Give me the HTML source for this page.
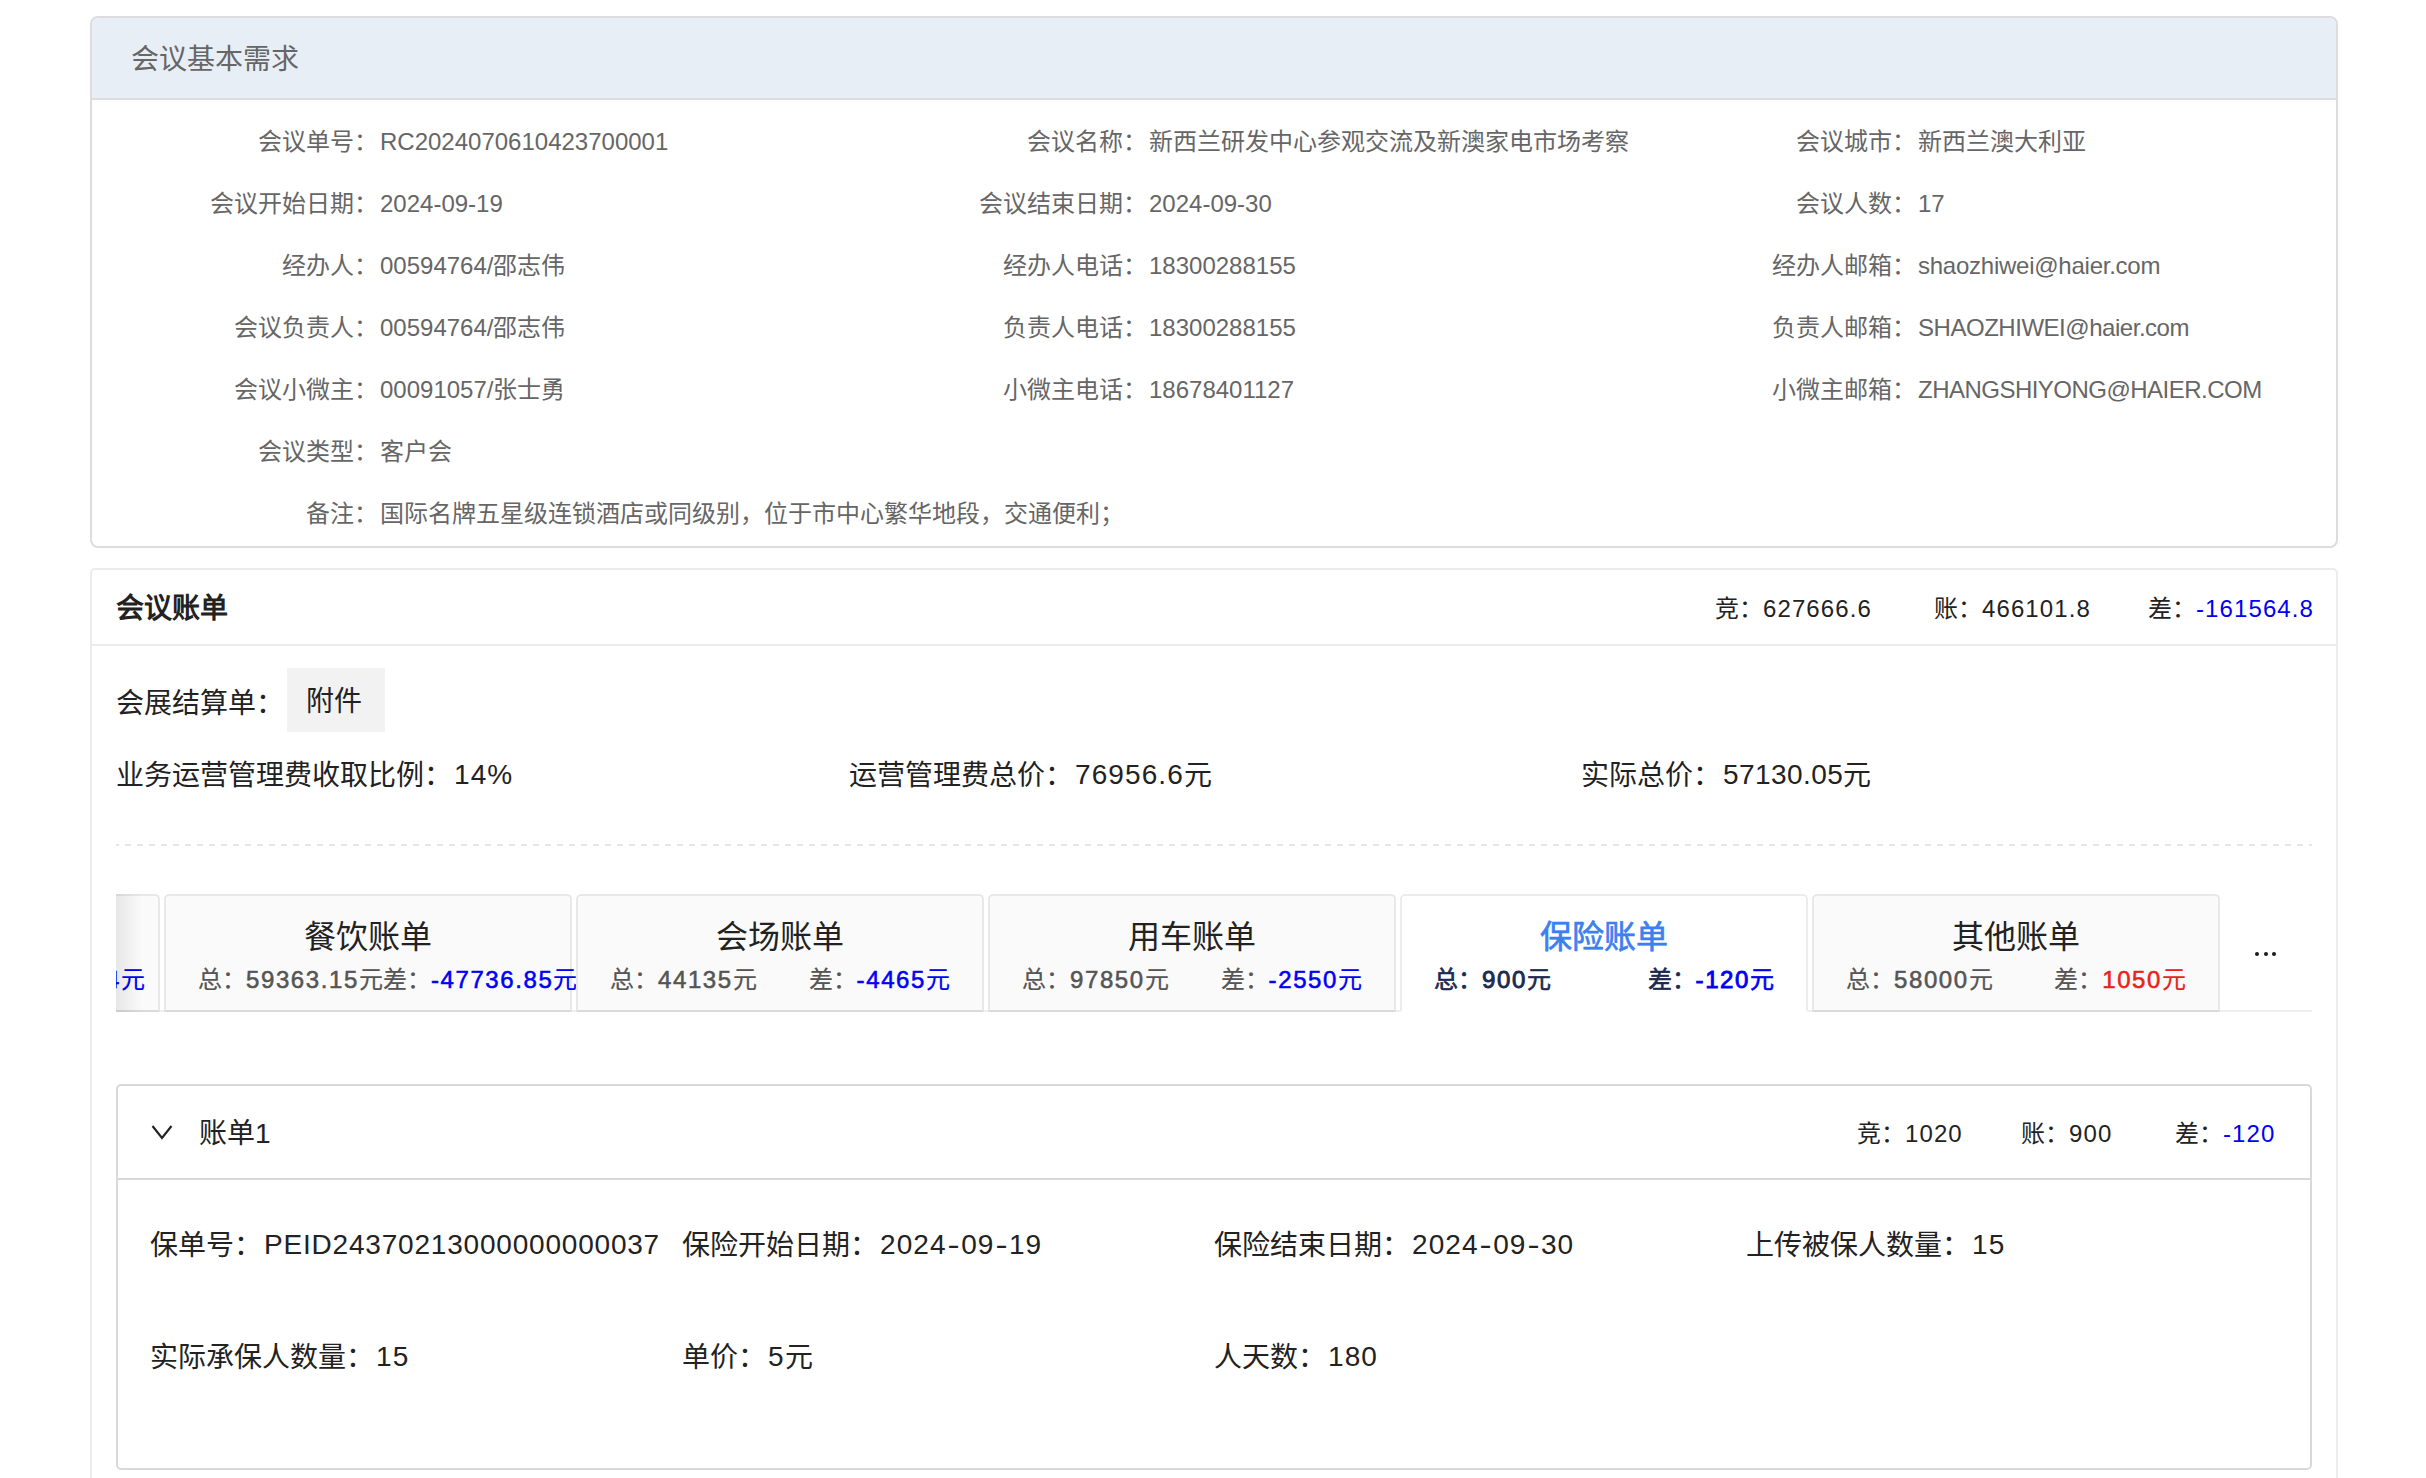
<!DOCTYPE html>
<html lang="zh-CN">
<head>
<meta charset="utf-8">
<style>
html,body{margin:0;padding:0;background:#fff;}
body{width:2426px;height:1478px;overflow:hidden;position:relative;font-family:"Liberation Sans",sans-serif;}
.a{position:absolute;white-space:nowrap;line-height:40px;}
.f24{font-size:24px;}
.f28{font-size:28px;}
.f32{font-size:32px;}
.g{color:#666;}
.k{color:#222;}
.lab{width:400px;text-align:right;}
.blue{color:#0000f5;}
.d{letter-spacing:1.1px;}
.h{display:inline-block;transform:scaleX(1.3);padding:0 2px 0 2px;}
.f28 .d{position:relative;top:-1px;margin-left:2px;}
.ts .d{font-weight:normal;letter-spacing:1.6px;-webkit-text-stroke:0.55px currentColor;}
#p1{position:absolute;left:90px;top:16px;width:2244px;height:528px;border:2px solid #dddddd;border-radius:8px;overflow:hidden;}
#p1h{position:absolute;left:0;top:0;width:2244px;height:80px;background:#e8eef5;border-bottom:2px solid #dddddd;}
#p2{position:absolute;left:90px;top:568px;width:2244px;height:1000px;border:2px solid #ececec;border-radius:5px;}
#p2h{position:absolute;left:0;top:0;width:2244px;height:74px;border-bottom:2px solid #ececec;}
#dash{position:absolute;left:116px;top:844px;width:2196px;height:2px;background:repeating-linear-gradient(90deg,#e6e6e6 0,#e6e6e6 6px,transparent 6px,transparent 12px);background-position:-3px 0;}
#navline{position:absolute;left:116px;top:1010px;width:2196px;height:2px;background:#efefef;}
#nav{position:absolute;left:116px;top:894px;width:2120px;height:118px;overflow:hidden;}
.tab{position:absolute;top:0;width:404px;height:114px;background:#fafafa;border:2px solid #e8e8e8;border-bottom-color:#dadada;border-radius:5px 5px 0 0;}
.tab.act{background:#fff;border-color:#ececec;border-bottom-color:#fff;}
.tt{position:absolute;left:0;width:404px;top:21px;text-align:center;font-size:32px;line-height:40px;color:#222;white-space:nowrap;}
.act .tt{color:#3c80f0;-webkit-text-stroke:0.7px currentColor;}
.ts{position:absolute;left:32px;width:340px;top:64px;line-height:40px;font-size:24px;font-weight:500;-webkit-text-stroke:0.2px currentColor;color:#555;display:flex;justify-content:space-between;white-space:nowrap;}
.act .ts{color:#1b2a4e;-webkit-text-stroke:0.6px currentColor;}
.act .ts .d{-webkit-text-stroke:0.9px currentColor;}
#shadow{position:absolute;left:116px;top:894px;width:26px;height:118px;background:linear-gradient(90deg,rgba(0,0,0,0.08),rgba(0,0,0,0));}
#more{position:absolute;left:2254px;top:952px;}
#more i{position:absolute;top:0;width:4px;height:4px;border-radius:50%;background:#1a1a1a;}
#col{position:absolute;left:116px;top:1084px;width:2192px;height:382px;border:2px solid #d9d9d9;border-radius:5px;}
#colh{position:absolute;left:0;top:0;width:2192px;height:92px;border-bottom:2px solid #d9d9d9;}
#btn{position:absolute;left:287px;top:668px;width:98px;height:64px;background:#f2f2f2;}
</style>
</head>
<body>
<!-- Panel 1 -->
<div id="p1"><div id="p1h"></div></div>
<div class="a f28 g" style="left:131px;top:40px;">会议基本需求</div>

<div class="a f24 g lab" style="left:-22px;top:122px;">会议单号：</div>
<div class="a f24 g" style="left:380px;top:122px;">RC2024070610423700001</div>
<div class="a f24 g lab" style="left:747px;top:122px;">会议名称：</div>
<div class="a f24 g" style="left:1149px;top:122px;">新西兰研发中心参观交流及新澳家电市场考察</div>
<div class="a f24 g lab" style="left:1516px;top:122px;">会议城市：</div>
<div class="a f24 g" style="left:1918px;top:122px;">新西兰澳大利亚</div>

<div class="a f24 g lab" style="left:-22px;top:184px;">会议开始日期：</div>
<div class="a f24 g" style="left:380px;top:184px;">2024-09-19</div>
<div class="a f24 g lab" style="left:747px;top:184px;">会议结束日期：</div>
<div class="a f24 g" style="left:1149px;top:184px;">2024-09-30</div>
<div class="a f24 g lab" style="left:1516px;top:184px;">会议人数：</div>
<div class="a f24 g" style="left:1918px;top:184px;">17</div>

<div class="a f24 g lab" style="left:-22px;top:246px;">经办人：</div>
<div class="a f24 g" style="left:380px;top:246px;">00594764/邵志伟</div>
<div class="a f24 g lab" style="left:747px;top:246px;">经办人电话：</div>
<div class="a f24 g" style="left:1149px;top:246px;">18300288155</div>
<div class="a f24 g lab" style="left:1516px;top:246px;">经办人邮箱：</div>
<div class="a f24 g" style="left:1918px;top:246px;letter-spacing:-0.25px;">shaozhiwei@haier.com</div>

<div class="a f24 g lab" style="left:-22px;top:308px;">会议负责人：</div>
<div class="a f24 g" style="left:380px;top:308px;">00594764/邵志伟</div>
<div class="a f24 g lab" style="left:747px;top:308px;">负责人电话：</div>
<div class="a f24 g" style="left:1149px;top:308px;">18300288155</div>
<div class="a f24 g lab" style="left:1516px;top:308px;">负责人邮箱：</div>
<div class="a f24 g" style="left:1918px;top:308px;letter-spacing:-0.47px;">SHAOZHIWEI@haier.com</div>

<div class="a f24 g lab" style="left:-22px;top:370px;">会议小微主：</div>
<div class="a f24 g" style="left:380px;top:370px;">00091057/张士勇</div>
<div class="a f24 g lab" style="left:747px;top:370px;">小微主电话：</div>
<div class="a f24 g" style="left:1149px;top:370px;">18678401127</div>
<div class="a f24 g lab" style="left:1516px;top:370px;">小微主邮箱：</div>
<div class="a f24 g" style="left:1918px;top:370px;letter-spacing:-0.52px;">ZHANGSHIYONG@HAIER.COM</div>

<div class="a f24 g lab" style="left:-22px;top:432px;">会议类型：</div>
<div class="a f24 g" style="left:380px;top:432px;">客户会</div>

<div class="a f24 g lab" style="left:-22px;top:494px;">备注：</div>
<div class="a f24 g" style="left:380px;top:494px;">国际名牌五星级连锁酒店或同级别，位于市中心繁华地段，交通便利；</div>

<!-- Panel 2 -->
<div id="p2"><div id="p2h"></div></div>
<div class="a f28 k" style="left:116px;top:589px;font-weight:bold;">会议账单</div>
<div class="a f24 k" style="left:1715px;top:589px;">竞：<span class="d">627666.6</span></div>
<div class="a f24 k" style="left:1934px;top:589px;">账：<span class="d">466101.8</span></div>
<div class="a f24 k" style="left:2148px;top:589px;">差：<span class="blue"><span class="d">-161564.8</span></span></div>

<div class="a f28 k" style="left:116px;top:684px;">会展结算单：</div>
<div id="btn"></div>
<div class="a f28 k" style="left:306px;top:682px;">附件</div>

<div class="a f28 k" style="left:116px;top:756px;">业务运营管理费收取比例：<span class="d">14%</span></div>
<div class="a f28 k" style="left:849px;top:756px;">运营管理费总价：<span class="d">76956.6</span>元</div>
<div class="a f28 k" style="left:1581px;top:756px;">实际总价：<span class="d" style="letter-spacing:0.45px">57130.05</span>元</div>

<div id="dash"></div>

<div id="navline"></div>
<div id="nav">
  <div class="tab" style="left:-364px;"><div class="ts" style="justify-content:flex-end;left:0;width:391px;"><span></span><span class="blue"><span class="d">-4464</span>元</span></div></div>
  <div class="tab" style="left:48px;"><div class="tt">餐饮账单</div><div class="ts"><span>总：<span class="d">59363.15</span>元</span><span>差：<span class="blue"><span class="d">-47736.85</span>元</span></span></div></div>
  <div class="tab" style="left:460px;"><div class="tt">会场账单</div><div class="ts"><span>总：<span class="d">44135</span>元</span><span>差：<span class="blue"><span class="d">-4465</span>元</span></span></div></div>
  <div class="tab" style="left:872px;"><div class="tt">用车账单</div><div class="ts"><span>总：<span class="d">97850</span>元</span><span>差：<span class="blue"><span class="d">-2550</span>元</span></span></div></div>
  <div class="tab act" style="left:1284px;"><div class="tt">保险账单</div><div class="ts"><span>总：<span class="d">900</span>元</span><span>差：<span class="blue"><span class="d">-120</span>元</span></span></div></div>
  <div class="tab" style="left:1696px;"><div class="tt">其他账单</div><div class="ts"><span>总：<span class="d">58000</span>元</span><span>差：<span style="color:#e8231c"><span class="d">1050</span>元</span></span></div></div>
</div>
<div id="shadow"></div>
<div id="more"><i style="left:1px"></i><i style="left:10px"></i><i style="left:18px"></i></div>

<!-- Collapse -->
<div id="col"><div id="colh"></div></div>
<svg style="position:absolute;left:150px;top:1123px;" width="24" height="18" viewBox="0 0 24 18"><path d="M2.5 3 L12 15 L21.5 3" fill="none" stroke="#222" stroke-width="2.1"/></svg>
<div class="a f28 k" style="left:199px;top:1114px;">账单1</div>
<div class="a f24 k" style="left:1857px;top:1114px;">竞：<span class="d">1020</span></div>
<div class="a f24 k" style="left:2021px;top:1114px;">账：<span class="d">900</span></div>
<div class="a f24 k" style="left:2175px;top:1114px;">差：<span class="blue"><span class="d">-120</span></span></div>

<div class="a f28 k" style="left:150px;top:1226px;">保单号：<span class="d" style="letter-spacing:0.8px">PEID24370213000000000037</span></div>
<div class="a f28 k" style="left:682px;top:1226px;">保险开始日期：<span class="d">2024<span class="h">-</span>09<span class="h">-</span>19</span></div>
<div class="a f28 k" style="left:1214px;top:1226px;">保险结束日期：<span class="d">2024<span class="h">-</span>09<span class="h">-</span>30</span></div>
<div class="a f28 k" style="left:1746px;top:1226px;">上传被保人数量：<span class="d">15</span></div>

<div class="a f28 k" style="left:150px;top:1338px;">实际承保人数量：<span class="d">15</span></div>
<div class="a f28 k" style="left:682px;top:1338px;">单价：<span class="d">5</span>元</div>
<div class="a f28 k" style="left:1214px;top:1338px;">人天数：<span class="d">180</span></div>

<div style="position:absolute;left:2336px;top:1470px;width:2px;height:8px;background:#ececec;"></div>
</body>
</html>
